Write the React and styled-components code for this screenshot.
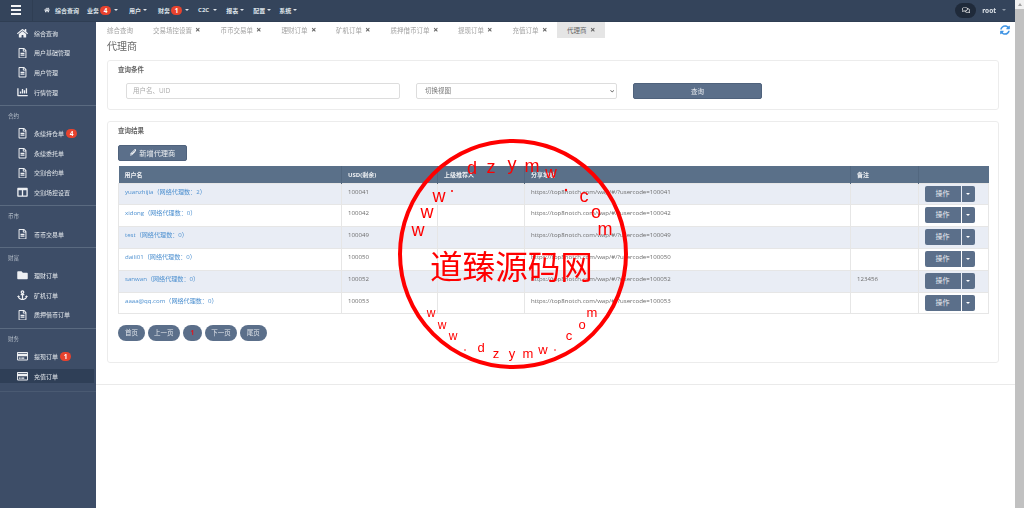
import React from 'react';
import styled, { createGlobalStyle } from 'styled-components';
import {
  FaHome, FaRegFileAlt, FaChartBar, FaRegCreditCard, FaFolder, FaAnchor, FaColumns,
  FaPencilAlt, FaTimes, FaSyncAlt, FaRegComments, FaChevronDown,
} from 'react-icons/fa';

const Global = createGlobalStyle`
  html, body { margin: 0; padding: 0; height: 100%; overflow: hidden; background: #fff; }
  body { font-family: "Open Sans", "Noto Sans CJK SC", sans-serif; font-size: 6px; color: #6c6c6c; }
  * { box-sizing: border-box; }
`;

const Shell = styled.div`
  position: relative;
  display: flex;
  width: 1024px;
  height: 508px;
  overflow: hidden;
`;

const Page = styled.div`
  flex: 1;
  display: flex;
  flex-direction: column;
  min-width: 0;
  filter: blur(0.35px);
`;

const ScrollTrack = styled.div`
  width: 9px;
  background: #f1f1f1;
  display: flex;
  flex-direction: column;
  align-items: center;
  padding-top: 3px;
`;

const ScrollArrow = styled.div`
  width: 0;
  height: 0;
  border: 2px solid transparent;
  border-top: 0;
  border-bottom: 3px solid #a3a3a3;
  margin-bottom: 3px;
`;

const ScrollThumb = styled.div`
  flex: 1;
  width: 100%;
  background: #c1c1c1;
`;

const TopBar = styled.header`
  height: 21.5px;
  background: #34445b;
  border-bottom: 1px solid #2f3e53;
  display: flex;
  align-items: center;
  flex: none;
  color: #dfe4ea;
`;

const Burger = styled.div`
  width: 33px;
  height: 100%;
  display: flex;
  flex-direction: column;
  justify-content: center;
  gap: 2px;
  padding: 0 11px;
  margin-right: 11px;
  border-right: 1px solid #2f3e53;
  span { display: block; height: 2px; background: #f2f4f6; }
`;

const NavItem = styled.div`
  display: flex;
  align-items: center;
  margin-right: ${(p) => p.$gap}px;
  font-size: 6px;
  font-weight: 700;
  white-space: nowrap;
  svg { font-size: 6px; margin-right: 5px; }
`;

const Badge = styled.span`
  display: inline-block;
  width: 11px;
  height: 9px;
  line-height: 9px;
  border-radius: 5px;
  background: #e8432e;
  color: #fff;
  font-size: 6.5px;
  font-weight: 700;
  text-align: center;
  margin-left: 1px;
`;

const Caret = styled.i`
  display: inline-block;
  width: 0;
  height: 0;
  margin-left: ${(p) => p.$gap ?? 3}px;
  border: 2px solid transparent;
  border-bottom: 0;
  border-top: 2px solid ${(p) => p.$color || '#dfe4ea'};
`;

const TopRight = styled.div`
  margin-left: auto;
  display: flex;
  align-items: center;
  padding-right: 9px;
  font-size: 6.5px;
  font-weight: 700;
`;

const ChatPill = styled.div`
  width: 21px;
  height: 15px;
  border-radius: 8px;
  background: #1f2a3a;
  margin-right: 6px;
  display: flex;
  align-items: center;
  justify-content: center;
  color: #f1f1f1;
  font-size: 8px;
`;

const Body = styled.div`
  flex: 1;
  display: flex;
  min-height: 0;
`;

const Sidebar = styled.aside`
  width: 96px;
  flex: none;
  background: #3d4d67;
`;

const SideSection = styled.section`
  display: flex;
  flex-direction: column;
  padding: ${(p) => (p.$first ? 2 : 0)}px 0 3px;
  border-bottom: 1px solid #5a6a80;
  &:last-child { padding-bottom: 5px; border-bottom-color: #4a5a72; }
`;

const SideLabel = styled.div`
  height: 18px;
  padding: 6px 0 0 8px;
  font-size: 5.5px;
  line-height: 9px;
  color: #b6bfca;
`;

const SideItem = styled.div`
  height: 14px;
  margin: 2.8px 2px 2.8px 0;
  padding-left: 17px;
  display: flex;
  align-items: center;
  font-size: 6px;
  color: #e4e8ec;
  background: ${(p) => (p.$active ? '#2f3f57' : 'transparent')};
  svg { width: 11px; font-size: 10.5px; margin-right: 6px; color: #eef0f3; flex: none; }
`;

const SideBadge = styled(Badge)`
  margin-left: 2px;
`;

const Main = styled.main`
  position: relative;
  flex: 1;
  min-width: 0;
`;

const TabBar = styled.nav`
  height: 16px;
  display: flex;
  padding-left: 1px;
`;

const Tab = styled.div`
  display: flex;
  align-items: center;
  padding: 0 10px;
  font-size: 6.5px;
  white-space: nowrap;
  color: ${(p) => (p.$active ? '#666' : '#a2a2a2')};
  background: ${(p) => (p.$active ? '#e5e5e5' : 'transparent')};
  svg { font-size: 5.5px; margin-left: 3px; color: #666; }
`;

const Refresh = styled(FaSyncAlt)`
  position: absolute;
  top: 3px;
  right: 5px;
  font-size: 10px;
  color: #3f94e4;
`;

const Content = styled.div`
  padding: 0 16px 21px 11px;
  border-bottom: 1px solid #eaeaea;
`;

const PageTitle = styled.h1`
  margin: 0;
  height: 22px;
  font-size: 10px;
  font-weight: 400;
  line-height: 17px;
  color: #666;
`;

const Card = styled.section`
  border: 1px solid #ececec;
  border-radius: 3px;
  padding: 4px 10px ${(p) => p.$bottom}px;
  margin-bottom: 11px;
  &:last-child { margin-bottom: 0; }
`;

const CardTitle = styled.h2`
  margin: 0;
  height: 10px;
  font-size: 6.5px;
  line-height: 10px;
  font-weight: 700;
  color: #666;
`;

const SearchRow = styled.form`
  display: flex;
  gap: 16px;
  margin-top: 8px;
  padding-left: 8px;
`;

const TextInput = styled.input`
  width: 274px;
  height: 16px;
  border: 1px solid #ddd;
  border-radius: 2px;
  padding: 0 6px;
  font: 6.5px "Open Sans", "Noto Sans CJK SC", sans-serif;
  outline: none;
  &::placeholder { color: #aaa; }
`;

const SelectWrap = styled.div`
  position: relative;
  width: 201px;
  height: 16px;
  svg { position: absolute; top: 6px; right: 3px; font-size: 4.5px; color: #555; pointer-events: none; }
`;

const ViewSelect = styled.select`
  appearance: none;
  width: 100%;
  height: 100%;
  border: 1px solid #ddd;
  border-radius: 2px;
  background: #fff;
  padding: 0 8px;
  font: 6.5px "Open Sans", "Noto Sans CJK SC", sans-serif;
  color: #777;
`;

const SearchButton = styled.button`
  width: 129px;
  height: 16px;
  border: 1px solid #4f627c;
  border-radius: 2px;
  background: #5b6f8a;
  color: #e8ebef;
  font: 6.5px "Open Sans", "Noto Sans CJK SC", sans-serif;
  padding: 0;
`;

const AddButton = styled.button`
  display: flex;
  align-items: center;
  justify-content: center;
  gap: 3px;
  width: 69px;
  height: 16px;
  margin: 9px 0 5px;
  border: 1px solid #4f627c;
  border-radius: 2px;
  background: #5b6f8a;
  color: #eef0f3;
  font: 7.2px "Open Sans", "Noto Sans CJK SC", sans-serif;
  padding: 0;
  svg { font-size: 6.5px; }
`;

const Grid = styled.table`
  width: 870px;
  border-collapse: collapse;
  table-layout: fixed;
  font-size: 6.1px;
`;

const HeadCell = styled.th`
  height: 17.5px;
  padding: 0 6px;
  background: #5a7089;
  color: #eef0f3;
  text-align: left;
  font-size: 6px;
  font-weight: 700;
  border-right: 1px solid #52677f;
  &:last-child { border-right: 0; }
`;

const Row = styled.tr`
  background: ${(p) => (p.$odd ? '#e9edf5' : '#fff')};
`;

const Cell = styled.td`
  height: 21.83px;
  padding: 3px 6px 0;
  vertical-align: top;
  line-height: 9px;
  border: 1px solid #e6e6e6;
  white-space: nowrap;
  overflow: hidden;
`;

const ActionCell = styled(Cell)`
  padding: 2px 5.5px 0;
`;

const UserLink = styled.a`
  color: #4d90d0;
  text-decoration: none;
`;

const ActionGroup = styled.div`
  display: flex;
  width: 50px;
  height: 16px;
`;

const ActionMain = styled.div`
  width: 36px;
  border-radius: 2px 0 0 2px;
  background: #5b6f8a;
  color: #e8ebef;
  font-size: 7px;
  line-height: 16px;
  text-align: center;
`;

const ActionCaret = styled.div`
  flex: 1;
  margin-left: 1px;
  border-radius: 0 2px 2px 0;
  background: #5b6f8a;
  display: flex;
  align-items: center;
  justify-content: center;
  i { margin: 0; }
`;

const Pager = styled.div`
  display: flex;
  gap: 3px;
  margin-top: 11px;
`;

const PageButton = styled.div`
  height: 15.5px;
  padding: 0 ${(p) => p.$pad}px;
  border-radius: 8px;
  background: #5b6f8a;
  color: ${(p) => (p.$current ? '#e3131b' : '#dfe4ea')};
  font-size: 6.5px;
  font-weight: ${(p) => (p.$current ? 700 : 400)};
  line-height: 15px;
`;

const Stamp = styled.svg`
  position: absolute;
  left: 0;
  top: 0;
  pointer-events: none;
`;

const navItems = [
  { label: '业务', badge: 4, gap: 11, caretGap: 3 },
  { label: '用户', gap: 11, caretGap: 2 },
  { label: '财务', badge: 1, gap: 9, caretGap: 3 },
  { label: 'C2C', gap: 9, caretGap: 4 },
  { label: '报表', gap: 9, caretGap: 2 },
  { label: '配置', gap: 8, caretGap: 2 },
  { label: '系统', gap: 0, caretGap: 2 },
];

const sideSections = [
  {
    items: [
      { icon: FaHome, label: '综合查询' },
      { icon: FaRegFileAlt, label: '用户基础管理' },
      { icon: FaRegFileAlt, label: '用户管理' },
      { icon: FaChartBar, label: '行情管理' },
    ],
  },
  {
    title: '合约',
    items: [
      { icon: FaRegFileAlt, label: '永续持仓单', badge: 4 },
      { icon: FaRegFileAlt, label: '永续委托单' },
      { icon: FaRegFileAlt, label: '交割合约单' },
      { icon: FaColumns, label: '交割场控设置' },
    ],
  },
  { title: '币市', items: [{ icon: FaRegFileAlt, label: '币币交易单' }] },
  {
    title: '财富',
    items: [
      { icon: FaFolder, label: '理财订单' },
      { icon: FaAnchor, label: '矿机订单' },
      { icon: FaRegFileAlt, label: '质押借币订单' },
    ],
  },
  {
    title: '财务',
    items: [
      { icon: FaRegCreditCard, label: '提现订单', badge: 1 },
      { icon: FaRegCreditCard, label: '充值订单', active: true },
    ],
  },
];

const tabs = ['交易场控设置', '币币交易单', '理财订单', '矿机订单', '质押借币订单', '提现订单', '充值订单'];

const agents = [
  { name: 'yuanzhijia', count: 2, uid: '100041' },
  { name: 'xidong', count: 0, uid: '100042' },
  { name: 'test', count: 0, uid: '100049' },
  { name: 'daili01', count: 0, uid: '100050' },
  { name: 'sanwan', count: 0, uid: '100052', note: '123456' },
  { name: 'aaaa@qq.com', count: 0, uid: '100053' },
];

const columns = [
  { label: '用户名', width: 223 },
  { label: 'USD(剩余)', width: 96 },
  { label: '上级推荐人', width: 87 },
  { label: '分享地址', width: 326 },
  { label: '备注', width: 68 },
  { label: '', width: 70 },
];

const stampLetters = [
  ['d', 472, 174, 18], ['z', 491, 173, 18], ['y', 512, 170, 18], ['m', 532, 172, 18], ['w', 551, 178, 16],
  ['c', 584, 202, 18], ['o', 596, 218, 18], ['m', 605, 235, 18],
  ['w', 439, 202, 18], ['w', 427, 218, 18], ['w', 418, 236, 18],
  ['w', 431, 317, 12], ['w', 442, 329, 12], ['w', 453, 340, 12],
  ['d', 481, 352, 13], ['z', 496, 358, 13], ['y', 512, 358, 13], ['m', 528, 358, 13], ['w', 543, 354, 13],
  ['c', 569, 340, 13], ['o', 582, 329, 13], ['m', 592, 317, 13],
];

const stampDots = [[566, 190, 1.2], [452, 191, 1], [465, 350, 0.8], [555, 350, 0.8]];

function App() {
  return (
    <Shell>
      <Global />
      <Page>
        <TopBar>
          <Burger><span /><span /><span /></Burger>
          <NavItem $gap={8}><FaHome />综合查询</NavItem>
          {navItems.map((item) => (
            <NavItem key={item.label} $gap={item.gap}>
              {item.label}
              {item.badge && <Badge>{item.badge}</Badge>}
              <Caret $gap={item.caretGap} />
            </NavItem>
          ))}
          <TopRight>
            <ChatPill><FaRegComments /></ChatPill>
            root
            <Caret $gap={6} $color="#8e99a8" />
          </TopRight>
        </TopBar>
        <Body>
          <Sidebar>
            {sideSections.map((section, index) => (
              <SideSection key={section.title || 'top'} $first={index === 0}>
                {section.title && <SideLabel>{section.title}</SideLabel>}
                {section.items.map((item) => (
                  <SideItem key={item.label} $active={item.active}>
                    <item.icon />
                    {item.label}
                    {item.badge && <SideBadge>{item.badge}</SideBadge>}
                  </SideItem>
                ))}
              </SideSection>
            ))}
          </Sidebar>
          <Main>
            <TabBar>
              <Tab>综合查询</Tab>
              {tabs.map((tab) => <Tab key={tab}>{tab}<FaTimes /></Tab>)}
              <Tab $active>代理商<FaTimes /></Tab>
            </TabBar>
            <Refresh />
            <Content>
              <PageTitle>代理商</PageTitle>
              <Card $bottom={10}>
                <CardTitle>查询条件</CardTitle>
                <SearchRow>
                  <TextInput placeholder="用户名、UID" />
                  <SelectWrap>
                    <ViewSelect defaultValue="view">
                      <option value="view">切换视图</option>
                    </ViewSelect>
                    <FaChevronDown />
                  </SelectWrap>
                  <SearchButton type="button">查询</SearchButton>
                </SearchRow>
              </Card>
              <Card $bottom={21}>
                <CardTitle>查询结果</CardTitle>
                <AddButton type="button"><FaPencilAlt />新增代理商</AddButton>
                <Grid>
                  <colgroup>
                    {columns.map((col) => <col key={col.width + col.label} width={col.width} />)}
                  </colgroup>
                  <thead>
                    <tr>{columns.map((col) => <HeadCell key={col.width + col.label}>{col.label}</HeadCell>)}</tr>
                  </thead>
                  <tbody>
                    {agents.map((agent, index) => (
                      <Row key={agent.uid} $odd={index % 2 === 0}>
                        <Cell><UserLink href="#">{agent.name}（网络代理数：{agent.count}）</UserLink></Cell>
                        <Cell>{agent.uid}</Cell>
                        <Cell />
                        <Cell>https://top8notch.com/wap/#/?usercode={agent.uid}</Cell>
                        <Cell>{agent.note}</Cell>
                        <ActionCell>
                          <ActionGroup>
                            <ActionMain>操作</ActionMain>
                            <ActionCaret><Caret $color="#fff" /></ActionCaret>
                          </ActionGroup>
                        </ActionCell>
                      </Row>
                    ))}
                  </tbody>
                </Grid>
                <Pager>
                  <PageButton $pad={7}>首页</PageButton>
                  <PageButton $pad={6}>上一页</PageButton>
                  <PageButton $pad={8} $current>1</PageButton>
                  <PageButton $pad={6}>下一页</PageButton>
                  <PageButton $pad={7}>尾页</PageButton>
                </Pager>
              </Card>
            </Content>
          </Main>
        </Body>
      </Page>
      <ScrollTrack><ScrollArrow /><ScrollThumb /></ScrollTrack>
      <Stamp width="1024" height="508" viewBox="0 0 1024 508">
        <circle cx="513" cy="254" r="113" fill="none" stroke="#f00" strokeWidth="4" />
        <text x="430" y="279" fill="#f00" fontSize="32.6" fontFamily='"Noto Sans CJK SC", sans-serif'>道臻源码网</text>
        {stampLetters.map(([letter, x, y, size]) => (
          <text key={`${letter}${x}`} x={x} y={y} fill="#f00" fontSize={size} textAnchor="middle" fontFamily='"Liberation Sans", sans-serif'>{letter}</text>
        ))}
        {stampDots.map(([x, y, r]) => <circle key={x} cx={x} cy={y} r={r} fill="#f00" />)}
      </Stamp>
    </Shell>
  );
}

export default App;
